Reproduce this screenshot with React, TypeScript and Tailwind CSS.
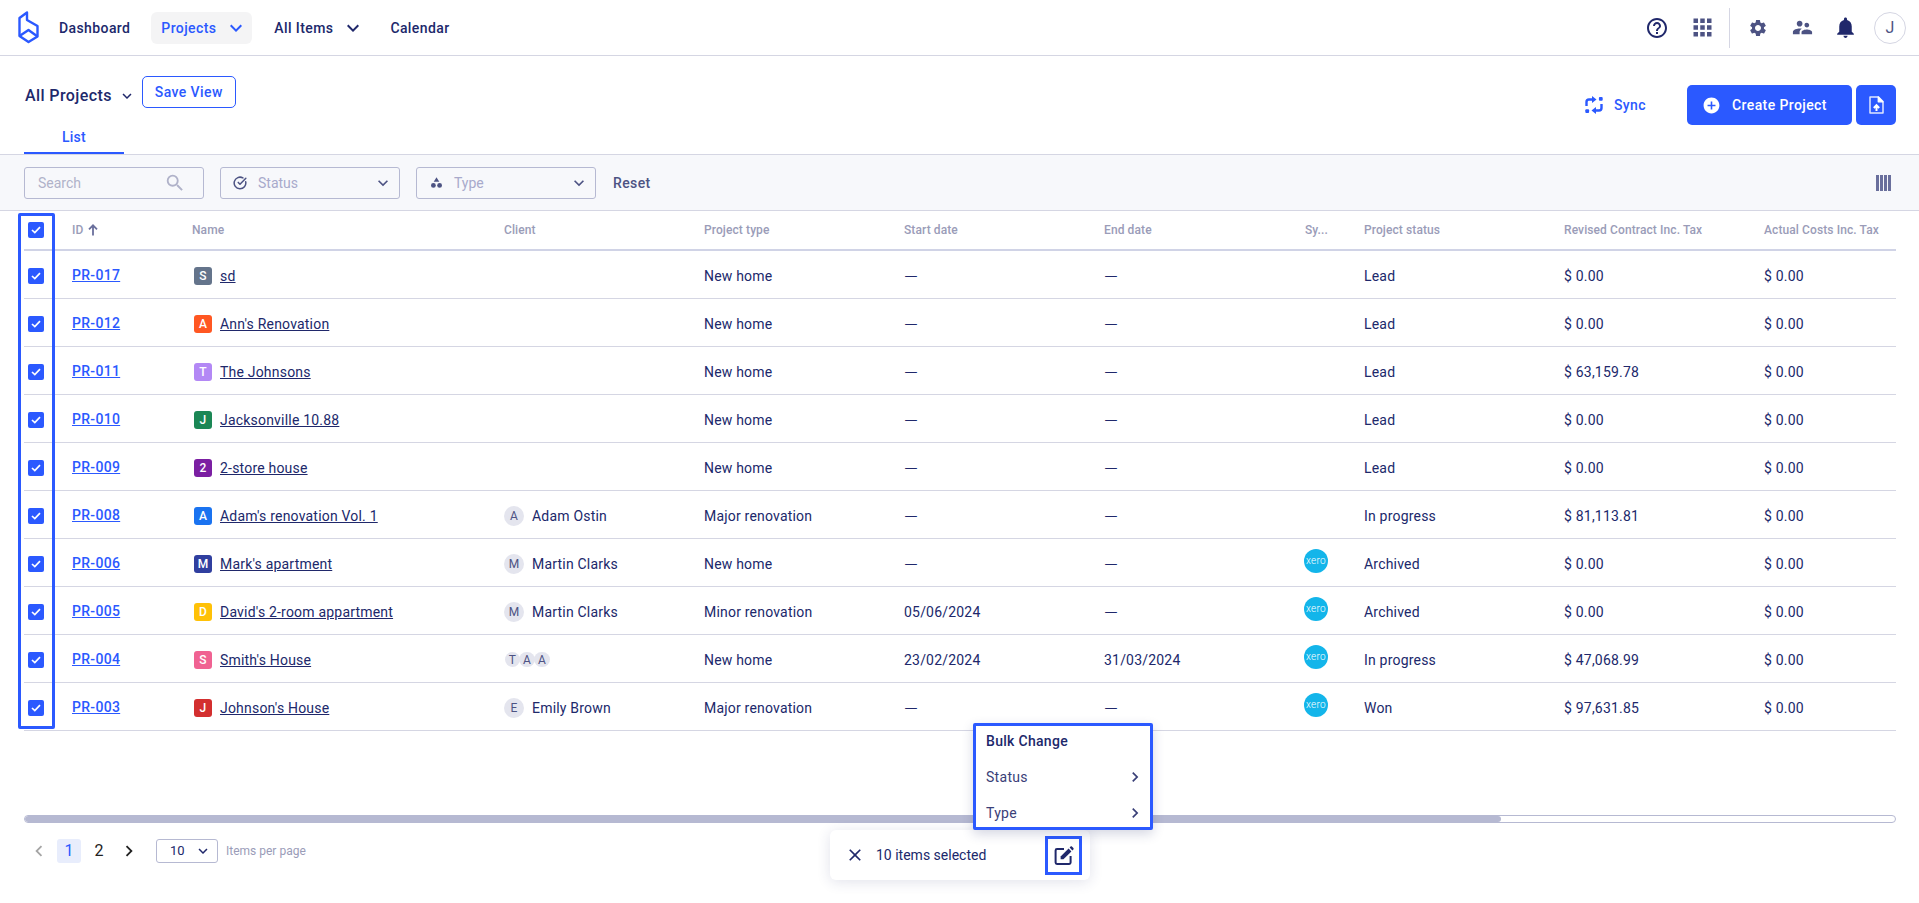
import React from "react";
import { MdHelpOutline, MdApps, MdSettings, MdSupervisorAccount, MdNotifications, MdAddCircle, MdSearch, MdKeyboardArrowDown, MdKeyboardArrowLeft, MdKeyboardArrowRight, MdClose } from "react-icons/md";
import { CircleCheckBig } from "lucide-react";

const navy = "text-[#20286b]";

function Logo() {
  return (
    <svg width="21" height="33" viewBox="0 0 21 33" fill="none" stroke="#2b59ff" strokeWidth="2.4" strokeLinejoin="round">
      <path d="M9 1.5 L1.5 7 V25 L10.5 31 L19.5 25.5 V15 L9 9 Z" />
      <path d="M1.5 25 L10.5 19 L19.5 25.5" />
    </svg>
  );
}

function SyncIcon() {
  return (
    <svg width="20" height="20" viewBox="0 0 20 20" fill="#2b59ff">
      <path d="M2.5 11 V7 Q2.5 4.5 5 4.5 H9" fill="none" stroke="#2b59ff" strokeWidth="2.4" />
      <path d="M8 1 L12.5 4.5 L8 8 Z" />
      <path d="M17.5 9 V13 Q17.5 15.5 15 15.5 H11" fill="none" stroke="#2b59ff" strokeWidth="2.4" />
      <path d="M12 12 L7.5 15.5 L12 19 Z" />
      <rect x="1.3" y="14.3" width="3.8" height="3.8" rx="1" />
      <rect x="14.9" y="1.9" width="3.8" height="3.8" rx="1" />
    </svg>
  );
}

function UploadIcon() {
  return (
    <svg width="15" height="18" viewBox="0 0 15 18" fill="none">
      <path d="M1 1 H9.5 L14 5.5 V17 H1 Z" stroke="#dfe6ff" strokeWidth="1.5" strokeLinejoin="round" />
      <path d="M9.2 1 V5.8 H14 Z" fill="white" stroke="white" strokeWidth="1.2" strokeLinejoin="round" />
      <path d="M7.5 15 V9.5 M4.8 12 L7.5 9.2 L10.2 12" stroke="white" strokeWidth="2" />
    </svg>
  );
}

function TypeIcon() {
  return (
    <svg width="11" height="11" viewBox="0 0 11 11" fill="#4d5383">
      <path d="M5.5 0.3 L8.3 4.8 H2.7 Z" />
      <circle cx="2.4" cy="8.4" r="2.4" />
      <circle cx="8.6" cy="8.4" r="2.4" />
    </svg>
  );
}

function EditIcon() {
  return (
    <svg width="20" height="20" viewBox="0 0 20 20" fill="none">
      <path d="M10 3 H3 C2.2 3 1.6 3.6 1.6 4.4 V16.6 C1.6 17.4 2.2 18 3 18 H15.2 C16 18 16.6 17.4 16.6 16.6 V10" stroke="#20286b" strokeWidth="2" />
      <path d="M6.6 13.2 V10.4 L14.6 2.6 L17.4 5.4 L9.4 13.2 Z" fill="#20286b" />
      <path d="M15.6 1.6 L16.6 0.6 C17 0.2 17.5 0.2 17.9 0.6 L19.4 2.1 C19.8 2.5 19.8 3 19.4 3.4 L18.4 4.4 Z" fill="#20286b" />
    </svg>
  );
}

function ColumnsIcon() {
  return (
    <div className="flex gap-[1px]">
      <div className="w-[3px] h-4 bg-[#6a6f9c]" />
      <div className="w-[3px] h-4 bg-[#6a6f9c]" />
      <div className="w-[3px] h-4 bg-[#6a6f9c]" />
      <div className="w-[3px] h-4 bg-[#6a6f9c]" />
    </div>
  );
}

function SortArrow() {
  return (
    <svg width="10" height="12" viewBox="0 0 10 12" fill="none" stroke="#6a6f9c" strokeWidth="1.8">
      <path d="M5 11.5 V1.5 M1 5.3 L5 1.3 L9 5.3" />
    </svg>
  );
}

function Check() {
  return (
    <div className="w-4 h-4 rounded-[2px] bg-[#2b59ff] flex items-center justify-center">
      <svg width="10" height="8" viewBox="0 0 10 8" fill="none">
        <path d="M1 4 L3.8 6.6 L9 1.2" stroke="white" strokeWidth="1.7" />
      </svg>
    </div>
  );
}

function Xero() {
  return (
    <div className="w-6 h-6 rounded-full bg-[#13b5ea] flex items-center justify-center text-[10px] text-white leading-none font-light tracking-[0.3px] -mt-[5px] -ml-px">
      xero
    </div>
  );
}

function Avatar({ l, className }: { l: string; className?: string }) {
  return (
    <div className={"rounded-full bg-[#e4e5ee] flex items-center justify-center text-[#4d5383] " + (className ?? "w-5 h-5 text-xs")}>
      {l}
    </div>
  );
}

function Dash({ v }: { v: string }) {
  return v === "—" ? <span className="inline-block text-[18px] font-light leading-none translate-y-[2px]">—</span> : <>{v}</>;
}

const grid = "grid grid-cols-[48px_120px_312px_200px_200px_200px_201px_59px_200px_200px_132px] items-center";

type Row = {
  id: string; badge: string; color: string; name: string; client?: string | string[]; type: string;
  start: string; end: string; xero?: boolean; status: string; revised: string;
};

const rows: Row[] = [
  { id: "PR-017", badge: "S", color: "bg-[#64748b]", name: "sd", type: "New home", start: "—", end: "—", status: "Lead", revised: "$ 0.00" },
  { id: "PR-012", badge: "A", color: "bg-[#ff5722]", name: "Ann's Renovation", type: "New home", start: "—", end: "—", status: "Lead", revised: "$ 0.00" },
  { id: "PR-011", badge: "T", color: "bg-[#b388f5]", name: "The Johnsons", type: "New home", start: "—", end: "—", status: "Lead", revised: "$ 63,159.78" },
  { id: "PR-010", badge: "J", color: "bg-[#1b8755]", name: "Jacksonville 10.88", type: "New home", start: "—", end: "—", status: "Lead", revised: "$ 0.00" },
  { id: "PR-009", badge: "2", color: "bg-[#7b1fa2]", name: "2-store house", type: "New home", start: "—", end: "—", status: "Lead", revised: "$ 0.00" },
  { id: "PR-008", badge: "A", color: "bg-[#1a73f0]", name: "Adam's renovation Vol. 1", client: "Adam Ostin", type: "Major renovation", start: "—", end: "—", status: "In progress", revised: "$ 81,113.81" },
  { id: "PR-006", badge: "M", color: "bg-[#303f9f]", name: "Mark's apartment", client: "Martin Clarks", type: "New home", start: "—", end: "—", xero: true, status: "Archived", revised: "$ 0.00" },
  { id: "PR-005", badge: "D", color: "bg-[#ffc107]", name: "David's 2-room appartment", client: "Martin Clarks", type: "Minor renovation", start: "05/06/2024", end: "—", xero: true, status: "Archived", revised: "$ 0.00" },
  { id: "PR-004", badge: "S", color: "bg-[#f06292]", name: "Smith's House", client: ["T", "A", "A"], type: "New home", start: "23/02/2024", end: "31/03/2024", xero: true, status: "In progress", revised: "$ 47,068.99" },
  { id: "PR-003", badge: "J", color: "bg-[#d32f2f]", name: "Johnson's House", client: "Emily Brown", type: "Major renovation", start: "—", end: "—", xero: true, status: "Won", revised: "$ 97,631.85" },
];

const headers = ["ID", "Name", "Client", "Project type", "Start date", "End date", "Sy...", "Project status", "Revised Contract Inc. Tax", "Actual Costs Inc. Tax"];

export default function App() {
  return (
    <div className={"relative h-[903px] overflow-hidden bg-white flex flex-col font-['Roboto',sans-serif] text-sm " + navy}>
      {/* top nav */}
      <header className="h-14 shrink-0 border-b border-[#d5d6e3] flex items-center pl-[18px] pr-[13px]">
        <Logo />
        <nav className="flex items-center ml-[20px] font-medium tracking-[0.4px]">
          <span>Dashboard</span>
          <span className="ml-[21px] h-8 w-[101px] rounded-md bg-[#f4f4f5] flex items-center pl-[10px] text-[#2b59ff]">
            Projects
            <MdKeyboardArrowDown className="ml-[8px] text-[24px]" />
          </span>
          <span className="ml-[22px]">All Items</span>
          <MdKeyboardArrowDown className="ml-[8px] text-[24px]" />
          <span className="ml-[25px]">Calendar</span>
        </nav>
        <div className="ml-auto flex items-center">
          <MdHelpOutline className="text-[24px] mr-[20px]" />
          <MdApps className="text-[#4d5383] text-[27px] mr-[13px]" />
          <div className="w-px h-10 bg-[#d5d6e3] mr-[18px]" />
          <MdSettings className="text-[#4d5383] text-[20px] mr-[23px]" />
          <MdSupervisorAccount className="text-[#4d5383] text-[23px] mr-[19px]" />
          <MdNotifications className="text-[25px] mr-[16px]" />
          <div className="w-8 h-8 rounded-full border border-[#d5d6e3] flex items-center justify-center text-[#4d5383] text-base">J</div>
        </div>
      </header>

      {/* title row */}
      <section className="h-[99px] shrink-0 border-b border-[#d5d6e3] pl-6 pr-[23px] flex">
        <div className="flex flex-col">
          <div className="flex items-start mt-5 pl-[1px]">
            <span className="h-[38px] pt-[1px] flex items-center text-base font-medium tracking-[0.4px]">All Projects</span>
            <MdKeyboardArrowDown className="ml-[6px] mt-[11px] text-lg" />
            <button className="ml-[6px] w-[94px] h-8 rounded-[5px] border border-[#2b59ff] text-[#2b59ff] font-medium text-sm tracking-[0.4px] bg-white">Save View</button>
          </div>
          <div className="mt-auto w-[100px] h-[33px] pt-[6px] border-b-2 border-[#2b59ff] text-[#2b59ff] font-medium text-center leading-[20px] tracking-[0.3px]">List</div>
        </div>
        <div className="ml-auto mt-[29px] flex items-start">
          <span className="flex items-center h-10 text-[#2b59ff] font-medium tracking-[0.4px] gap-[10px] mr-[41px]">
            <SyncIcon />
            Sync
          </span>
          <button className="w-[165px] h-10 rounded-[5px] bg-[#2b59ff] text-white font-medium tracking-[0.4px] flex items-center pl-[15px] gap-[11px]">
            <MdAddCircle className="text-[19px]" />
            Create Project
          </button>
          <button className="ml-1 w-10 h-10 rounded-[5px] bg-[#2b59ff] flex items-center justify-center">
            <UploadIcon />
          </button>
        </div>
      </section>

      {/* filters */}
      <section className="h-14 shrink-0 bg-[#f7f8fb] border-b border-[#d5d6e3] px-6 flex items-center">
        <div className="w-[180px] h-8 rounded-[3px] border border-[#b6b9d2] flex items-center justify-between pl-[13px] pr-[17px] text-[#b0b2c9]">
          Search
          <MdSearch className="text-[22px]" />
        </div>
        <div className="ml-4 w-[180px] h-8 rounded-[3px] border border-[#b6b9d2] flex items-center pl-[12px] pr-[6px] text-[#a8aacb]">
          <CircleCheckBig className="w-[14px] h-[14px] text-[#4d5383] mr-[11px]" strokeWidth={2.6} />
          Status
          <MdKeyboardArrowDown className="ml-auto text-[#4d5383] text-xl" />
        </div>
        <div className="ml-4 w-[180px] h-8 rounded-[3px] border border-[#b6b9d2] flex items-center pl-[14px] pr-[6px] text-[#a8aacb]">
          <TypeIcon />
          <span className="ml-[12px]">Type</span>
          <MdKeyboardArrowDown className="ml-auto text-[#4d5383] text-xl" />
        </div>
        <span className="ml-[17px] text-[#4d5383] font-medium tracking-[0.4px]">Reset</span>
        <div className="ml-auto mr-[4px]">
          <ColumnsIcon />
        </div>
      </section>

      {/* table */}
      <section className="mx-6 w-[1872px]">
        <div className={grid + " h-10 border-b-2 border-[#d0d3e6] text-xs font-medium tracking-[0.1px] text-[#9a9cb8]"}>
          <div className="pl-1"><Check /></div>
          {headers.map((h, i) => (
            <div key={h} className="flex items-center gap-[5px] whitespace-nowrap">
              {h}
              {i === 0 && <SortArrow />}
            </div>
          ))}
        </div>
        {rows.map((r) => (
          <div key={r.id} className={grid + " h-12 pt-[2px] border-b border-[#d5d6e3] text-sm tracking-[0.2px]"}>
            <div className="pl-1"><Check /></div>
            <a className="text-[#2b59ff] underline font-medium tracking-[0.3px] -mt-[2px]">{r.id}</a>
            <div className="flex items-center pl-[2px]">
              <span className={"w-[18px] h-[18px] rounded-[3px] text-white text-xs font-medium flex items-center justify-center mr-2 " + r.color}>{r.badge}</span>
              <span className="underline">{r.name}</span>
            </div>
            <div className="flex items-center">
              {Array.isArray(r.client) ? (
                <div className="flex pl-[1px]">
                  {r.client.map((c, i) => (
                    <Avatar key={i} l={c} className={"w-[15px] h-[15px] text-xs " + (i ? "-ml-[1px] w-[16px]" : "")} />
                  ))}
                </div>
              ) : r.client ? (
                <>
                  <Avatar l={r.client[0]} />
                  <span className="ml-2">{r.client}</span>
                </>
              ) : null}
            </div>
            <div>{r.type}</div>
            <div><Dash v={r.start} /></div>
            <div><Dash v={r.end} /></div>
            <div>{r.xero && <Xero />}</div>
            <div>{r.status}</div>
            <div>{r.revised}</div>
            <div>$ 0.00</div>
          </div>
        ))}
      </section>

      {/* scrollbar */}
      <div className="mx-6 mt-[84px] w-[1872px] h-2 rounded-full border border-[#b6b9d2] overflow-hidden shrink-0">
        <div className="w-[1476px] h-full bg-[#b6b9d2] rounded-full" />
      </div>

      {/* pagination */}
      <div className="mx-6 mt-4 flex items-center h-6 shrink-0">
        <MdKeyboardArrowLeft className="text-[22px] text-[#a5a5a5] ml-[4px]" />
        <span className="ml-[7px] w-6 h-6 rounded-[3px] bg-[#e8edfc] text-[#2b59ff] flex items-center justify-center text-base">1</span>
        <span className="ml-[6px] w-6 h-6 flex items-center justify-center text-[#222] text-base">2</span>
        <MdKeyboardArrowRight className="ml-[7px] text-[22px] text-[#222]" />
        <div className="ml-[16px] w-[62px] h-6 rounded-[3px] border border-[#b6b9d2] flex items-center pl-[13px] pr-[5px] text-[13px]">
          10
          <MdKeyboardArrowDown className="ml-auto text-lg" />
        </div>
        <span className="ml-2 text-xs text-[#9a9cb8]">Items per page</span>
      </div>

      {/* selected bar */}
      <div className="absolute left-[830px] top-[830px] w-[260px] h-[50px] bg-white rounded-md shadow-[0_2px_14px_rgba(40,50,110,0.14)] flex items-center pl-[15px]">
        <MdClose className="text-[#20286b] text-[20px]" />
        <span className="ml-[11px]">10 items selected</span>
      </div>
      <div className="absolute left-[1045px] top-[836px] w-[37px] h-[39px] border-[3px] border-[#2b59ff] flex items-center justify-center">
        <EditIcon />
      </div>

      {/* bulk change popup */}
      <div className="absolute left-[973px] top-[723px] w-[180px] h-[107px] bg-white border-[3px] border-[#2b59ff] rounded-[2px] shadow-[0_4px_12px_rgba(40,50,110,0.2)] flex flex-col px-[10px] pt-[5px] tracking-[0.3px]">
        <div className="font-medium leading-[20px]">Bulk Change</div>
        <div className="mt-[16px] flex items-center justify-between leading-[20px] text-[#3a4078]">
          Status <MdKeyboardArrowRight className="text-[20px] mr-[-5px]" />
        </div>
        <div className="mt-[16px] flex items-center justify-between leading-[20px] text-[#3a4078]">
          Type <MdKeyboardArrowRight className="text-[20px] mr-[-5px]" />
        </div>
      </div>

      {/* highlight around checkboxes */}
      <div className="absolute left-[18px] top-[213px] w-[37px] h-[516px] border-[3px] border-[#2b59ff] rounded-[2px]" />
    </div>
  );
}
